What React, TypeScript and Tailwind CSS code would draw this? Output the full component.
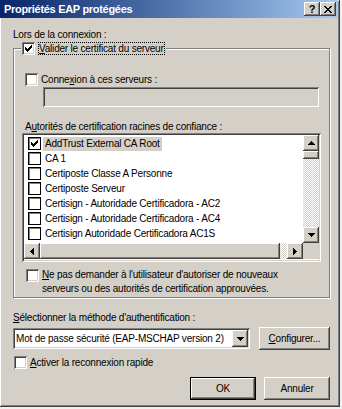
import React from 'react';

// Classic raised / sunken bevels
const raised = 'bg-[#d4d0c8] shadow-[inset_-1px_-1px_#404040,inset_1px_1px_#fff,inset_-2px_-2px_#808080]';
const sunken = 'shadow-[inset_1px_1px_#808080,inset_-1px_-1px_#fff,inset_2px_2px_#404040,inset_-2px_-2px_#d4d0c8]';
const checker = 'bg-[repeating-conic-gradient(#d4d0c8_0_25%,#ffffff_0_50%)] bg-[length:2px_2px]';

const Tick: React.FC = () => (
  <svg width="7" height="7" viewBox="0 0 7 7" shapeRendering="crispEdges">
    <path d="M0 2h1v1h1v1h1V3h1V2h1V1h1V0h1v3H6v1H5v1H4v1H3v1H2V6H1V5H0z" fill="#000" />
  </svg>
);

const CheckBox: React.FC<{ checked?: boolean }> = ({ checked }) => (
  <span className={`w-[13px] h-[13px] shrink-0 bg-white flex items-center justify-center ${sunken}`}>
    {checked && <Tick />}
  </span>
);

const ListCheck: React.FC<{ checked?: boolean }> = ({ checked }) => (
  <span className="w-[13px] h-[13px] shrink-0 bg-white border border-black shadow-[inset_1px_1px_#808080] flex items-center justify-center">
    {checked && <Tick />}
  </span>
);

const Arrow: React.FC<{ dir: 'up' | 'down' | 'left' | 'right' }> = ({ dir }) => {
  const paths = {
    up: 'M3 0h1v1h1v1h1v1h1v1H0V3h1V2h1V1h1z',
    down: 'M0 0h7v1H6v1H5v1H4v1H3V3H2V2H1V1H0z',
    left: 'M3 0h1v7H3V6H2V5H1V4H0V3h1V2h1V1h1z',
    right: 'M0 0h1v1h1v1h1v1h1v1H3v1H2v1H1v1H0z',
  };
  const vertical = dir === 'up' || dir === 'down';
  return (
    <svg width={vertical ? 7 : 4} height={vertical ? 4 : 7} viewBox={vertical ? '0 0 7 4' : '0 0 4 7'} shapeRendering="crispEdges">
      <path d={paths[dir]} fill="#000" />
    </svg>
  );
};

const ScrollBtn: React.FC<{ dir: 'up' | 'down' | 'left' | 'right' }> = ({ dir }) => (
  <div className={`w-[16px] h-[16px] shrink-0 flex items-center justify-center ${raised}`}>
    <Arrow dir={dir} />
  </div>
);

const certificates = [
  { name: 'AddTrust External CA Root', checked: true },
  { name: 'CA 1' },
  { name: 'Certiposte Classe A Personne' },
  { name: 'Certiposte Serveur' },
  { name: 'Certisign - Autoridade Certificadora - AC2' },
  { name: 'Certisign - Autoridade Certificadora - AC4' },
  { name: 'Certisign Autoridade Certificadora AC1S' },
];

const App: React.FC = () => {
  return (
    <div className="w-[342px] h-[409px] bg-[#f0f0f0] font-['Liberation_Sans',Arial,sans-serif] text-[10px] tracking-[-0.2px] leading-[13px] text-black">
      <div className="w-[340px] h-[407px] bg-[#d4d0c8] flex flex-col shadow-[inset_-1px_-1px_#404040,inset_1px_1px_#fff,inset_-2px_-2px_#808080]">
        {/* Title bar */}
        <div className="h-[18px] mr-[2px] flex items-center justify-between bg-gradient-to-r from-[#0a246a] to-[#a6caf0] pl-[4px] pr-[2px]">
          <span className="text-white font-bold text-[11px] tracking-[-0.3px]">Propriétés EAP protégées</span>
          <div className="flex">
            <div className={`w-[16px] h-[14px] flex items-center justify-center font-bold text-[11px] leading-none ${raised}`}>?</div>
            <div className={`w-[16px] h-[14px] flex items-center justify-center ${raised}`}>
              <svg width="8" height="7" viewBox="0 0 8 7" shapeRendering="crispEdges">
                <path d="M0 0h2v1h1v1h2V1h1V0h2v1H7v1H6v1H5v1h1v1h1v1h1v1H6V6H5V5H3v1H2v1H0V6h1V5h1V4h1V3H2V2H1V1H0z" fill="#000" />
              </svg>
            </div>
          </div>
        </div>

        <div className="pl-[13px] mt-[10px]">Lors de la connexion :</div>

        {/* Group box */}
        <div className="relative ml-[13px] mt-[7px] w-[317px] h-[250px] border border-[#808080] shadow-[inset_1px_1px_#fff,1px_1px_#fff] flex flex-col">
          <div className="absolute left-[7px] -top-[7px] flex items-center bg-[#d4d0c8] pl-[1px] pr-[1px]">
            <CheckBox checked />
            <span className="ml-[3px] px-[1px] outline outline-1 outline-dotted outline-black -outline-offset-1">
              <u>V</u>alider le certificat du serveur
            </span>
          </div>

          <div className="flex items-center mt-[24px] ml-[11px]">
            <CheckBox />
            <span className="ml-[3px]">Conne<u>x</u>ion à ces serveurs :</span>
          </div>
          <div className={`ml-[29px] mt-[1px] w-[276px] h-[20px] bg-[#d4d0c8] ${sunken}`} />

          <div className="ml-[11px] mt-[13px]">A<u>u</u>torités de certification racines de confiance :</div>

          {/* Certificate list */}
          <div className={`ml-[8px] w-[299px] h-[129px] bg-white p-[2px] flex flex-col ${sunken}`}>
            <div className="flex h-[108px]">
              <div className="flex-1 overflow-hidden pt-[1px]">
                {certificates.map((c, i) => (
                  <div key={c.name} className="h-[15px] flex items-center pl-[4px]">
                    <ListCheck checked={c.checked} />
                    <span className={`ml-[2px] px-[2px] h-[14px] flex items-center whitespace-nowrap ${i === 0 ? 'bg-[#d4d0c8]' : ''}`}>
                      {c.name}
                    </span>
                  </div>
                ))}
              </div>
              <div className={`w-[16px] flex flex-col ${checker}`}>
                <ScrollBtn dir="up" />
                <div className={`h-[8px] ${raised}`} />
                <div className="flex-1" />
                <ScrollBtn dir="down" />
              </div>
            </div>
            <div className="flex h-[16px]">
              <div className={`flex-1 flex ${checker}`}>
                <ScrollBtn dir="left" />
                <div className={`w-[240px] ${raised}`} />
                <div className="flex-1" />
                <ScrollBtn dir="right" />
              </div>
              <div className="w-[16px] bg-[#d4d0c8]" />
            </div>
          </div>

          <div className="flex items-start mt-[6px] ml-[12px]">
            <span className="mt-[1px]">
              <CheckBox />
            </span>
            <span className="ml-[3px] leading-[14px]">
              <u>N</u>e pas demander à l'utilisateur d'autoriser de nouveaux
              <br />
              serveurs ou des autorités de certification approuvées.
            </span>
          </div>
        </div>

        <div className="pl-[13px] mt-[13px]">
          <u>S</u>électionner la méthode d'authentification :
        </div>

        <div className="flex items-start pl-[13px] mt-[3px]">
          <div className={`mt-[1px] w-[237px] h-[21px] bg-white p-[2px] flex items-center ${sunken}`}>
            <span className="flex-1 pl-[1px] whitespace-nowrap">Mot de passe sécurité (EAP-MSCHAP version 2)</span>
            <div className={`w-[16px] h-[17px] flex items-center justify-center ${raised}`}>
              <Arrow dir="down" />
            </div>
          </div>
          <button className={`ml-[9px] w-[71px] h-[23px] flex items-center justify-center ${raised}`}>
            <u>C</u>onfigurer...
          </button>
        </div>

        <div className="flex items-center pl-[14px] mt-[6px]">
          <CheckBox />
          <span className="ml-[3px]">
            <u>A</u>ctiver la reconnexion rapide
          </span>
        </div>

        <div className="flex justify-end pr-[10px] mt-[8px] gap-[8px]">
          <button className="w-[66px] h-[23px] border border-black">
            <div className={`w-full h-full flex items-center justify-center ${raised}`}>OK</div>
          </button>
          <button className={`w-[66px] h-[23px] flex items-center justify-center ${raised}`}>Annuler</button>
        </div>
      </div>
    </div>
  );
};

export default App;
